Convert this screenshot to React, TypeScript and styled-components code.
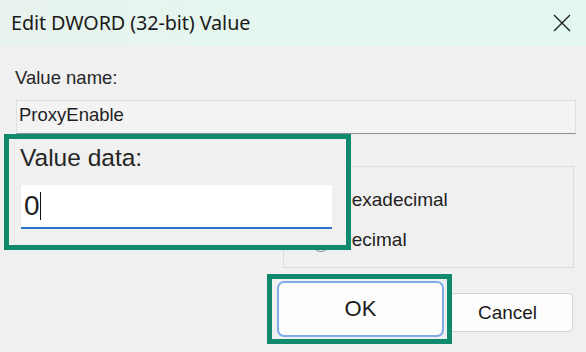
import React from "react";
import styled, { createGlobalStyle } from "styled-components";

const GlobalStyle = createGlobalStyle`
  html, body {
    margin: 0;
    padding: 0;
    background: #f0f0f0;
  }
  body {
    width: 586px;
    height: 352px;
    overflow: hidden;
  }
`;

const Window = styled.div`
  position: relative;
  width: 586px;
  height: 352px;
  display: flex;
  flex-direction: column;
  background: #f0f0f0;
  font-family: "Liberation Sans", Arial, sans-serif;
  color: #262626;
  overflow: hidden;
`;

const TitleBar = styled.div`
  height: 46px;
  flex: none;
  display: flex;
  align-items: center;
  justify-content: space-between;
  padding: 0 15px 0 11px;
  box-sizing: border-box;
  background: linear-gradient(90deg, #e8f2ed 0%, #e5f6ee 35%, #e3f8f0 100%);
`;

const Title = styled.div`
  font-family: "Noto Sans", "Open Sans", sans-serif;
  font-size: 19.8px;
  line-height: 24px;
  color: #1b1b1b;
  letter-spacing: -0.1px;
`;

const CloseButton = styled.div`
  width: 18px;
  height: 18px;
  display: flex;
  align-items: center;
  justify-content: center;
`;

const Body = styled.div`
  flex: 1;
  display: flex;
  flex-direction: column;
  padding: 21px 12px 0 16px;
`;

const Label = styled.div`
  font-size: 18.5px;
  line-height: 22px;
  margin-left: -1px;
  color: #262626;
`;

const NameBox = styled.div`
  margin-top: 11px;
  margin-right: -2px;
  height: 34px;
  box-sizing: border-box;
  border: 1px solid #dedede;
  border-bottom-color: #8c8c8c;
  background: #f3f3f3;
  padding: 3px 0 0 2px;
  font-size: 18.5px;
  line-height: 22px;
  color: #1f1f1f;
`;

const Row = styled.div`
  margin-top: 32px;
  display: flex;
  justify-content: flex-end;
  align-items: flex-start;
`;

const BaseGroup = styled.div`
  width: 291px;
  height: 102px;
  box-sizing: border-box;
  border: 1px solid #dcdcdc;
  padding: 22px 0 0 27px;
  display: flex;
  flex-direction: column;
  gap: 18px;
`;

const RadioRow = styled.div`
  display: flex;
  align-items: center;
  gap: 7px;
  height: 22px;
  font-size: 19px;
  line-height: 22px;
  color: #1f1f1f;
`;

const RadioCircle = styled.span<{ $checked?: boolean }>`
  width: 20px;
  height: 20px;
  box-sizing: border-box;
  border-radius: 50%;
  flex: none;
  margin-top: ${(p) => (p.$checked ? "0" : "4px")};
  border: ${(p) => (p.$checked ? "5px solid #0067c0" : "1px solid #8a8a8a")};
  background: ${(p) => (p.$checked ? "#ffffff" : "#f6f6f6")};
`;

const ButtonRow = styled.div`
  margin-top: 25px;
  margin-right: 1px;
  display: flex;
  justify-content: flex-end;
  gap: 9px;
`;

const DialogButton = styled.div`
  width: 131px;
  height: 39px;
  box-sizing: border-box;
  display: flex;
  align-items: center;
  justify-content: center;
  border: 1px solid #d3d3d3;
  border-radius: 4px;
  background: #fdfdfd;
  font-size: 19px;
  color: #1a1a1a;
`;

const Callout = styled.div`
  position: absolute;
  box-sizing: border-box;
  border: 5px solid #0f8a6c;
  background: #f0f0f0;
`;

const DataCallout = styled(Callout)`
  left: 4px;
  top: 134px;
  width: 347px;
  height: 116px;
  padding: 5px 14px 0 12px;
  display: flex;
  flex-direction: column;
`;

const CalloutLabel = styled.div`
  font-size: 24.5px;
  line-height: 28px;
  margin-left: -1px;
  color: #262626;
`;

const CalloutInput = styled.div`
  margin-top: 13px;
  height: 44px;
  box-sizing: border-box;
  background: #ffffff;
  border-bottom: 2px solid #2f73d0;
  display: flex;
  align-items: center;
  padding-left: 3px;
  font-size: 28px;
  line-height: 28px;
  color: #1f1f1f;
`;

const Caret = styled.span`
  width: 1.5px;
  height: 28px;
  background: #111;
`;

const OkCallout = styled(Callout)`
  left: 267px;
  top: 274px;
  width: 185px;
  height: 70px;
  padding: 2px 3px 2px 5px;
  display: flex;
`;

const BigOkButton = styled.div`
  flex: 1;
  box-sizing: border-box;
  display: flex;
  align-items: center;
  justify-content: center;
  border: 2px solid #80abe9;
  border-radius: 7px;
  background: #fdfdfd;
  font-size: 22px;
  color: #1a1a1a;
`;

export default function App() {
  return (
    <>
      <GlobalStyle />
      <Window>
        <TitleBar>
          <Title>Edit DWORD (32-bit) Value</Title>
          <CloseButton>
            <svg width="18" height="18" viewBox="0 0 18 18">
              <path
                d="M1 1 L17 17 M17 1 L1 17"
                stroke="#222"
                strokeWidth="1.4"
                fill="none"
              />
            </svg>
          </CloseButton>
        </TitleBar>
        <Body>
          <Label>Value name:</Label>
          <NameBox>ProxyEnable</NameBox>
          <Row>
            <BaseGroup>
              <RadioRow>
                <RadioCircle $checked />
                Hexadecimal
              </RadioRow>
              <RadioRow>
                <RadioCircle />
                Decimal
              </RadioRow>
            </BaseGroup>
          </Row>
          <ButtonRow>
            <DialogButton>Cancel</DialogButton>
          </ButtonRow>
        </Body>
        <DataCallout>
          <CalloutLabel>Value data:</CalloutLabel>
          <CalloutInput>
            0
            <Caret />
          </CalloutInput>
        </DataCallout>
        <OkCallout>
          <BigOkButton>OK</BigOkButton>
        </OkCallout>
      </Window>
    </>
  );
}
